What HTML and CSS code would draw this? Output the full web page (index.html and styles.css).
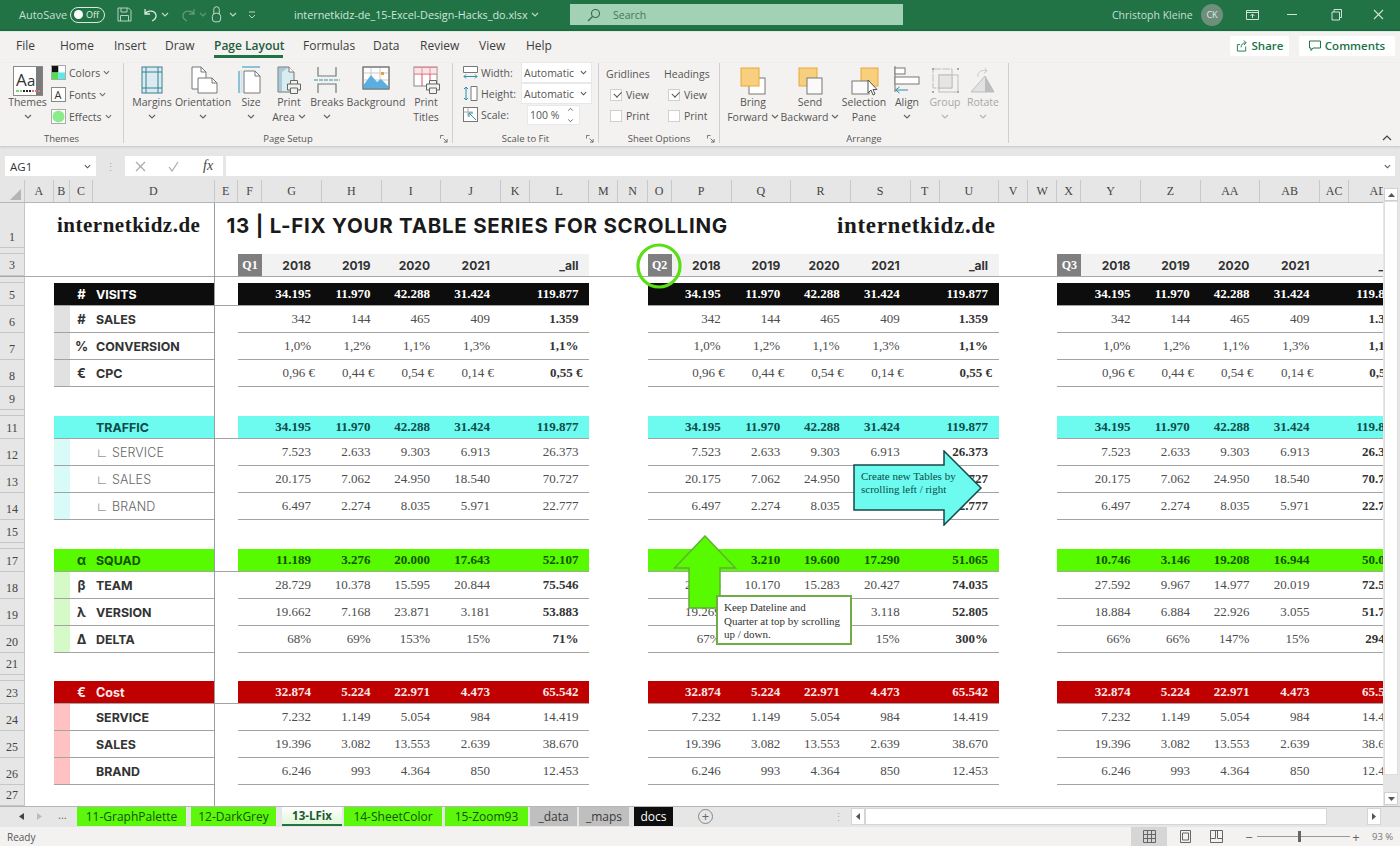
FILE: index.html
```html
<!DOCTYPE html>
<html lang="en">
<head>
<meta charset="utf-8">
<title>internetkidz-de_15-Excel-Design-Hacks_do.xlsx</title>
<link rel="stylesheet" href="styles.css">
</head>
<body>
<svg class="sprite" aria-hidden="true"><symbol id="chev" viewBox="0 0 8 5"><path d="M1 1l3 3 3-3" fill="none" stroke="currentColor" stroke-width="1.2"/></symbol>
<symbol id="launch" viewBox="0 0 9 9"><path d="M.5 4V.5H4M4 4l4 4M8 4.500V8H4.500" fill="none" stroke="#666" stroke-width="1"/></symbol>
<symbol id="printer" viewBox="0 0 14 14"><path d="M3.500 4V.5h7V4M3.500 10H.5V4h13v6h-3M3.500 8h7v5.500h-7z" fill="#f3f2f1" stroke="#666"/></symbol></svg>
<div class="app">

<header class="titlebar">
  <span class="autosave">AutoSave</span>
  <span class="toggle"><i class="knob"></i>Off</span>
  <svg class="ti ti-save" viewBox="0 0 15 15"><path d="M1 1h10.500L14 3.500V14H1zM4 1v4h6V1M3.500 14V8.500h8V14" fill="none" stroke="#b5d3c1"/></svg>
  <svg class="ti ti-undo" viewBox="0 0 15 15"><path d="M2 2v5h5M2 7c2-4 10-4 11 1 .5 3-2 5-4 6" fill="none" stroke="#d8e8de" stroke-width="1.300"/></svg>
  <svg class="tchev"><use href="#chev"/></svg>
  <svg class="ti ti-redo" viewBox="0 0 15 15"><path d="M13 2v5H8M13 7C11 3 3 3 2 8c-.5 3 2 5 4 6" fill="none" stroke="#5f9a7a" stroke-width="1.300"/></svg>
  <svg class="tchev dim"><use href="#chev"/></svg>
  <svg class="ti ti-touch" viewBox="0 0 12 18"><path d="M3 9V3.500a3 3 0 0 1 6 0V9M1.500 11c0-2 2-3.500 4.500-3.500s4.500 1.500 4.500 3.500v3a3 3 0 0 1-3 3h-3a3 3 0 0 1-3-3z" fill="none" stroke="#cfe2d6"/></svg>
  <svg class="tchev tchev-t"><use href="#chev"/></svg>
  <svg class="qat" viewBox="0 0 8 8"><path d="M1 1h6M1 4l3 3 3-3" fill="none" stroke="#bcd6c6"/></svg>
  <span class="filename">internetkidz-de_15-Excel-Design-Hacks_do.xlsx</span>
  <svg class="tchev fchev"><use href="#chev"/></svg>
  <div class="search">
    <svg class="search-ico" viewBox="0 0 14 14"><circle cx="8.500" cy="5.500" r="4" fill="none" stroke="#2f6b4a" stroke-width="1.100"/><path d="M5.500 8.500L1 13" stroke="#2f6b4a" stroke-width="1.100"/></svg>
    <span>Search</span>
  </div>
  <span class="user">Christoph Kleine</span>
  <span class="avatar">CK</span>
  <svg class="wi wi-ribbon" viewBox="0 0 13 13"><path d="M.5 2.500h12v9H.5zM.5 4.500h12M6.500 10V6M4.500 8l2-2 2 2" fill="none" stroke="#cfe2d6"/></svg>
  <svg class="wi wi-min" viewBox="0 0 13 13"><path d="M1 6.500h10" stroke="#cfe2d6"/></svg>
  <svg class="wi wi-max" viewBox="0 0 13 13"><path d="M2 4h7.500v8H2zM4 4V1.500h7.500V9.500H9.500" fill="none" stroke="#cfe2d6"/></svg>
  <svg class="wi wi-close" viewBox="0 0 13 13"><path d="M2 2l9 9M11 2l-9 9" stroke="#cfe2d6" stroke-width="1.100"/></svg>
</header>

<nav class="menutabs">
  <span>File</span><span>Home</span><span>Insert</span><span>Draw</span><span class="on">Page Layout</span><span>Formulas</span><span>Data</span><span>Review</span><span>View</span><span>Help</span>
  <div class="menu-actions">
    <span class="action act-share"><svg viewBox="0 0 12 13"><path d="M1 5h3M1 5v7h9V7M5 8c0-3 2-5 5-5M8 .5l2.500 2.500L8 5.500" fill="none" stroke="#217346"/></svg>Share</span>
    <span class="action act-comm"><svg viewBox="0 0 12 12"><path d="M.5 1h11v7H4L2 10.500V8H.5z" fill="none" stroke="#217346"/></svg>Comments</span>
  </div>
</nav>

<section class="ribbon">
  <div class="group g-themes">
    <div class="gbody">
      <div class="big b-themes">
        <svg class="ic" viewBox="0 0 30 30"><rect x=".5" y=".5" width="29" height="29" fill="#fff" stroke="#8a8a8a"/><path d="M23 1h6.500v28H23z" fill="#7b7b7b"/><text x="3" y="20" font-family="Open Sans, sans-serif" font-size="17" fill="#333">A</text><text x="14" y="20" font-family="Open Sans, sans-serif" font-size="15" fill="#333">a</text><path d="M3 25h3M7 25h2" stroke="#7fd27f" stroke-width="2"/><path d="M10 25h8" stroke="#222" stroke-width="2" stroke-dasharray="2 1"/><path d="M19 25h8" stroke="#d97a7a" stroke-width="2" stroke-dasharray="2 1"/></svg>
        <span>Themes</span><svg class="chev"><use href="#chev"/></svg>
      </div>
      <div class="smallstack">
        <span><svg class="sq" viewBox="0 0 15 15"><path d="M0 0h7.500v7.500H0z" fill="#111"/><path d="M7.500 0H15v7.500H7.500z" fill="#fff"/><path d="M0 7.500h7.500V15H0z" fill="#4fe04f"/><path d="M7.500 7.500H15V15H7.500z" fill="#5fe8e8"/><rect x=".5" y=".5" width="14" height="14" fill="none" stroke="#aaa"/></svg>Colors<svg class="chev"><use href="#chev"/></svg></span>
        <span><svg class="sq" viewBox="0 0 15 15"><rect x=".5" y=".5" width="14" height="14" fill="#fff" stroke="#888"/><text x="3.500" y="11.500" font-family="Open Sans, sans-serif" font-size="11" fill="#333">A</text></svg>Fonts<svg class="chev"><use href="#chev"/></svg></span>
        <span><svg class="sq" viewBox="0 0 15 15"><rect x=".5" y=".5" width="14" height="14" fill="#fff" stroke="#aaa"/><circle cx="7.500" cy="7.500" r="6" fill="#8cec8c"/></svg>Effects<svg class="chev"><use href="#chev"/></svg></span>
      </div>
    </div>
    <div class="glabel">Themes</div>
  </div>

  <div class="group g-page">
    <div class="gbody">
      <div class="big w48"><svg class="ic" viewBox="0 0 32 30"><rect x="6" y="1" width="20" height="26" fill="#d9ecf2" stroke="#3c7f8e"/><path d="M6 6h20M6 22h20M10 1v26M22 1v26" stroke="#3c7f8e"/></svg><span>Margins</span><svg class="chev"><use href="#chev"/></svg></div>
      <div class="big w54"><svg class="ic" viewBox="0 0 32 30"><path d="M5 1h9l5 5v17H5z" fill="#fff" stroke="#777"/><path d="M14 1v5h5" fill="none" stroke="#777"/><path d="M11 12h14l5 5v10H11z" fill="#fff" stroke="#777"/><path d="M25 12v5h5" fill="none" stroke="#777"/></svg><span>Orientation</span><svg class="chev"><use href="#chev"/></svg></div>
      <div class="big w42"><svg class="ic" viewBox="0 0 32 30"><path d="M9 5h11l5 5v17H9z" fill="#fff" stroke="#777"/><path d="M20 5v5h5" fill="none" stroke="#777"/><path d="M7 1h18M4 5v22" stroke="#6db3c9" stroke-width="1.500"/><path d="M5.500 4h2v23h-2z" fill="#cfe6ee"/></svg><span>Size</span><svg class="chev"><use href="#chev"/></svg></div>
      <div class="big w34"><svg class="ic" viewBox="0 0 32 30"><path d="M5 1h11l5 5v20H5z" fill="#d9ecf2" stroke="#777"/><path d="M16 1v5h5" fill="#fff" stroke="#777"/><path d="M9 6v20H5V1h11" fill="#7fa8b8" fill-opacity=".5"/><use href="#printer" x="14" y="14" width="14" height="14"/></svg><span>Print</span><span class="ln2">Area<svg class="chev"><use href="#chev"/></svg></span></div>
      <div class="big w42"><svg class="ic" viewBox="0 0 32 30"><path d="M7 1v9h18V1M7 27V18h18v9" fill="none" stroke="#777" stroke-width="1.200"/><path d="M3 14h26" stroke="#6db3c9" stroke-width="1.500" stroke-dasharray="4 1"/></svg><span>Breaks</span><svg class="chev"><use href="#chev"/></svg></div>
      <div class="big w56"><svg class="ic" viewBox="0 0 32 30"><rect x="3" y="1" width="26" height="22" fill="#fff" stroke="#777"/><path d="M3 7h26M3 14h26M11 1v22M20 1v22" stroke="#c9c9c9"/><path d="M3.500 19L11 9l6 7 4-3 8 8v2H3.500z" fill="#5aaee0"/><rect x="21" y="6" width="3" height="3" fill="#e8a13a"/><rect x="3" y="1" width="26" height="22" fill="none" stroke="#777"/></svg><span>Background</span></div>
      <div class="big w44"><svg class="ic" viewBox="0 0 32 30"><rect x="4" y="1" width="23" height="19" fill="#fff" stroke="#888"/><path d="M4 1.500h23M4 8h23M12 1v19M20 1v19" stroke="#d9505f"/><path d="M4 1h23v7H4z" fill="#f7c9cc" fill-opacity=".5"/><use href="#printer" x="16" y="14" width="14" height="14"/></svg><span>Print</span><span class="ln2">Titles</span></div>
    </div>
    <div class="glabel">Page Setup<svg class="launch"><use href="#launch"/></svg></div>
  </div>

  <div class="group g-scale">
    <div class="gbody scalebody">
      <div class="srow"><svg class="si" viewBox="0 0 15 14"><path d="M.5 1h14v6H.5z" fill="#fff" stroke="#777"/><path d="M1 11h13M1 11l2-2M1 11l2 2M14 11l-2-2M14 11l-2 2" fill="none" stroke="#2f8fa6"/></svg><span class="slab">Width:</span><span class="combo">Automatic<svg class="chev"><use href="#chev"/></svg></span></div>
      <div class="srow"><svg class="si" viewBox="0 0 15 15"><path d="M8 .5h6v14H8z" fill="#fff" stroke="#777"/><path d="M3 1v13M3 1L1 3M3 1l2 2M3 14l-2-2M3 14l2-2" fill="none" stroke="#2f8fa6"/></svg><span class="slab">Height:</span><span class="combo">Automatic<svg class="chev"><use href="#chev"/></svg></span></div>
      <div class="srow"><svg class="si" viewBox="0 0 15 15"><rect x=".5" y=".5" width="14" height="14" fill="#fff" stroke="#777"/><path d="M.5 5h9M5 .5v9" stroke="#aaa"/><path d="M6 6l7 7M6 6h4M6 6v4" fill="none" stroke="#2f8fa6"/></svg><span class="slab">Scale:</span><span class="spin">100 %<svg viewBox="0 0 7 18"><path d="M1 4l2.500-2.500L6 4M1 14l2.500 2.500L6 14" fill="none" stroke="#555"/></svg></span></div>
    </div>
    <div class="glabel">Scale to Fit<svg class="launch"><use href="#launch"/></svg></div>
  </div>

  <div class="group g-opts">
    <div class="gbody optsbody">
      <div class="ocol"><span class="ohead">Gridlines</span><span class="ochk"><i class="box checked"></i>View</span><span class="ochk"><i class="box"></i>Print</span></div>
      <div class="ocol"><span class="ohead">Headings</span><span class="ochk"><i class="box checked"></i>View</span><span class="ochk"><i class="box"></i>Print</span></div>
    </div>
    <div class="glabel">Sheet Options<svg class="launch"><use href="#launch"/></svg></div>
  </div>

  <div class="group g-arr">
    <div class="gbody">
      <div class="big w56"><svg class="ic" viewBox="0 0 32 30"><rect x="12" y="12" width="16" height="16" fill="#fff" stroke="#777"/><rect x="4" y="2" width="18" height="18" fill="#f8cf7c" stroke="#e6a93c"/></svg><span>Bring</span><span class="ln2">Forward<svg class="chev"><use href="#chev"/></svg></span></div>
      <div class="big w58"><svg class="ic" viewBox="0 0 32 30"><rect x="5" y="2" width="18" height="18" fill="#f8cf7c" stroke="#e6a93c"/><rect x="13" y="12" width="15" height="16" fill="#fafafa" stroke="#777"/></svg><span>Send</span><span class="ln2">Backward<svg class="chev"><use href="#chev"/></svg></span></div>
      <div class="big w50"><svg class="ic" viewBox="0 0 32 30"><rect x="13" y="2" width="17" height="18" fill="#f8cf7c" stroke="#e6a93c"/><rect x="4" y="15" width="17" height="13" fill="#fafafa" stroke="#777"/><path d="M20 14v13l3-3 2 5 2-1-2-4.500h4z" fill="#fff" stroke="#555"/></svg><span>Selection</span><span class="ln2">Pane</span></div>
      <div class="big w36"><svg class="ic" viewBox="0 0 32 30"><path d="M4 0v26" stroke="#777"/><rect x="4" y="2" width="10" height="6" fill="#fff" stroke="#777"/><rect x="4" y="11" width="24" height="7" fill="#fff" stroke="#777"/><path d="M4.500 24H17M4.500 24l4-3M4.500 24l4 3" fill="none" stroke="#2f8fa6"/></svg><span>Align</span><svg class="chev"><use href="#chev"/></svg></div>
      <div class="big w40 off"><svg class="ic" viewBox="0 0 32 30"><path d="M4 3h19v19H4z" fill="none" stroke="#bdbdbd" stroke-dasharray="8 1"/><rect x="10" y="9" width="19" height="17" fill="none" stroke="#bdbdbd"/><rect x="10" y="9" width="13" height="13" fill="#e5e5e5" stroke="#bdbdbd"/><path d="M3 2h2v2H3zM28 2h2v2h-2zM3 25h2v2H3zM28 25h2v2h-2z" fill="#aaa"/></svg><span>Group</span><svg class="chev"><use href="#chev"/></svg></div>
      <div class="big w36 off"><svg class="ic" viewBox="0 0 32 30"><path d="M4 26L18 10l9 16z" fill="#e2e2e2" stroke="#bdbdbd"/><path d="M18 10v16h9z" fill="#bdbdbd"/><path d="M11 11c-1-5 4-8 9-6M18 2l2 3-3 2" fill="none" stroke="#c9c9c9"/></svg><span>Rotate</span><svg class="chev"><use href="#chev"/></svg></div>
    </div>
    <div class="glabel">Arrange</div>
  </div>
  <svg class="collapse" viewBox="0 0 10 6"><path d="M1 5l4-4 4 4" fill="none" stroke="#444" stroke-width="1.200"/></svg>
</section>

<div class="fbar">
  <div class="namebox">AG1<svg class="caret"><use href="#chev"/></svg></div>
  <span class="fdots">⋮</span>
  <div class="fbtns">
    <svg viewBox="0 0 11 11"><path d="M1 1l9 9M10 1l-9 9" stroke="#a9a9a9" stroke-width="1.200"/></svg>
    <svg viewBox="0 0 11 11"><path d="M1 6l3 4 6-9" fill="none" stroke="#a9a9a9" stroke-width="1.200"/></svg>
    <span class="fx">fx</span>
  </div>
  <div class="finput"><svg class="caret"><use href="#chev"/></svg></div>
</div>

<main class="grid-area">
 <div class="sheet">
  <div class="colhead">
    <div class="corner"></div><div>A</div><div>B</div><div>C</div><div>D</div><div>E</div><div>F</div><div>G</div><div>H</div><div>I</div><div>J</div><div>K</div><div>L</div><div>M</div><div>N</div><div>O</div><div>P</div><div>Q</div><div>R</div><div>S</div><div>T</div><div>U</div><div>V</div><div>W</div><div>X</div><div>Y</div><div>Z</div><div>AA</div><div>AB</div><div>AC</div><div>AD</div>
  </div>

  <div class="row-title">
    <div class="rn">1</div>
    <div class="brand brand-a">internetkidz.de</div>
    <div class="headline">13 | L-FIX YOUR TABLE SERIES FOR SCROLLING</div>
    <div class="brand brand-b">internetkidz.de</div>
  </div>
  <div class="row h6"><div class="rn"></div></div>
  <div class="row h23 frozen"><div class="rn">3</div>
    <div class="tb t1 yr"><b class="q">Q1</b><b class="v">2018</b><b class="v">2019</b><b class="v">2020</b><b class="v">2021</b><b class="v">_all</b></div>
    <div class="tb t2 yr"><b class="q">Q2</b><b class="v">2018</b><b class="v">2019</b><b class="v">2020</b><b class="v">2021</b><b class="v">_all</b></div>
    <div class="tb t3 yr"><b class="q">Q3</b><b class="v">2018</b><b class="v">2019</b><b class="v">2020</b><b class="v">2021</b><b class="v">_all</b></div>
  </div>
  <div class="row h6"><div class="rn"></div></div>

  <div class="row h23 band black"><div class="rn">5</div><div class="sw"></div><div class="sy">#</div><div class="tx">VISITS</div><div class="e"></div>
    <div class="tb t1"><span class="v">34.195</span><span class="v">11.970</span><span class="v">42.288</span><span class="v">31.424</span><span class="v">119.877</span></div>
    <div class="tb t2"><span class="v">34.195</span><span class="v">11.970</span><span class="v">42.288</span><span class="v">31.424</span><span class="v">119.877</span></div>
    <div class="tb t3"><span class="v">34.195</span><span class="v">11.970</span><span class="v">42.288</span><span class="v">31.424</span><span class="v">119.877</span></div>
  </div>
  <div class="row h27 grey"><div class="rn">6</div><div class="sw"></div><div class="sy">#</div><div class="tx">SALES</div>
    <div class="tb t1"><span class="v">342</span><span class="v">144</span><span class="v">465</span><span class="v">409</span><span class="v sum">1.359</span></div>
    <div class="tb t2"><span class="v">342</span><span class="v">144</span><span class="v">465</span><span class="v">409</span><span class="v sum">1.359</span></div>
    <div class="tb t3"><span class="v">342</span><span class="v">144</span><span class="v">465</span><span class="v">409</span><span class="v sum">1.359</span></div>
  </div>
  <div class="row h27 grey"><div class="rn">7</div><div class="sw"></div><div class="sy">%</div><div class="tx">CONVERSION</div>
    <div class="tb t1"><span class="v">1,0%</span><span class="v">1,2%</span><span class="v">1,1%</span><span class="v">1,3%</span><span class="v sum">1,1%</span></div>
    <div class="tb t2"><span class="v">1,0%</span><span class="v">1,2%</span><span class="v">1,1%</span><span class="v">1,3%</span><span class="v sum">1,1%</span></div>
    <div class="tb t3"><span class="v">1,0%</span><span class="v">1,2%</span><span class="v">1,1%</span><span class="v">1,3%</span><span class="v sum">1,1%</span></div>
  </div>
  <div class="row h27 grey cur"><div class="rn">8</div><div class="sw"></div><div class="sy">€</div><div class="tx">CPC</div>
    <div class="tb t1"><span class="v">0,96 €</span><span class="v">0,44 €</span><span class="v">0,54 €</span><span class="v">0,14 €</span><span class="v sum">0,55 €</span></div>
    <div class="tb t2"><span class="v">0,96 €</span><span class="v">0,44 €</span><span class="v">0,54 €</span><span class="v">0,14 €</span><span class="v sum">0,55 €</span></div>
    <div class="tb t3"><span class="v">0,96 €</span><span class="v">0,44 €</span><span class="v">0,54 €</span><span class="v">0,14 €</span><span class="v sum">0,55 €</span></div>
  </div>
  <div class="row h23"><div class="rn">9</div></div>
  <div class="row h6"><div class="rn"></div></div>

  <div class="row h23 band cyan"><div class="rn">11</div><div class="sw"></div><div class="sy"></div><div class="tx">TRAFFIC</div><div class="e"></div>
    <div class="tb t1"><span class="v">34.195</span><span class="v">11.970</span><span class="v">42.288</span><span class="v">31.424</span><span class="v">119.877</span></div>
    <div class="tb t2"><span class="v">34.195</span><span class="v">11.970</span><span class="v">42.288</span><span class="v">31.424</span><span class="v">119.877</span></div>
    <div class="tb t3"><span class="v">34.195</span><span class="v">11.970</span><span class="v">42.288</span><span class="v">31.424</span><span class="v">119.877</span></div>
  </div>
  <div class="row h27 lcyan sub"><div class="rn">12</div><div class="sw"></div><div class="sy"></div><div class="tx">∟ SERVICE</div>
    <div class="tb t1"><span class="v">7.523</span><span class="v">2.633</span><span class="v">9.303</span><span class="v">6.913</span><span class="v">26.373</span></div>
    <div class="tb t2"><span class="v">7.523</span><span class="v">2.633</span><span class="v">9.303</span><span class="v">6.913</span><span class="v sum">26.373</span></div>
    <div class="tb t3"><span class="v">7.523</span><span class="v">2.633</span><span class="v">9.303</span><span class="v">6.913</span><span class="v sum">26.373</span></div>
  </div>
  <div class="row h27 lcyan sub"><div class="rn">13</div><div class="sw"></div><div class="sy"></div><div class="tx">∟ SALES</div>
    <div class="tb t1"><span class="v">20.175</span><span class="v">7.062</span><span class="v">24.950</span><span class="v">18.540</span><span class="v">70.727</span></div>
    <div class="tb t2"><span class="v">20.175</span><span class="v">7.062</span><span class="v">24.950</span><span class="v"></span><span class="v sum">70.727</span></div>
    <div class="tb t3"><span class="v">20.175</span><span class="v">7.062</span><span class="v">24.950</span><span class="v">18.540</span><span class="v sum">70.727</span></div>
  </div>
  <div class="row h27 lcyan sub"><div class="rn">14</div><div class="sw"></div><div class="sy"></div><div class="tx">∟ BRAND</div>
    <div class="tb t1"><span class="v">6.497</span><span class="v">2.274</span><span class="v">8.035</span><span class="v">5.971</span><span class="v">22.777</span></div>
    <div class="tb t2"><span class="v">6.497</span><span class="v">2.274</span><span class="v">8.035</span><span class="v"></span><span class="v sum">22.777</span></div>
    <div class="tb t3"><span class="v">6.497</span><span class="v">2.274</span><span class="v">8.035</span><span class="v">5.971</span><span class="v sum">22.777</span></div>
  </div>
  <div class="row h23"><div class="rn">15</div></div>
  <div class="row h6"><div class="rn"></div></div>

  <div class="row h23 band green"><div class="rn">17</div><div class="sw"></div><div class="sy">α</div><div class="tx">SQUAD</div><div class="e"></div>
    <div class="tb t1"><span class="v">11.189</span><span class="v">3.276</span><span class="v">20.000</span><span class="v">17.643</span><span class="v">52.107</span></div>
    <div class="tb t2"><span class="v"></span><span class="v">3.210</span><span class="v">19.600</span><span class="v">17.290</span><span class="v">51.065</span></div>
    <div class="tb t3"><span class="v">10.746</span><span class="v">3.146</span><span class="v">19.208</span><span class="v">16.944</span><span class="v">50.044</span></div>
  </div>
  <div class="row h27 lgreen"><div class="rn">18</div><div class="sw"></div><div class="sy">β</div><div class="tx">TEAM</div>
    <div class="tb t1"><span class="v">28.729</span><span class="v">10.378</span><span class="v">15.595</span><span class="v">20.844</span><span class="v sum">75.546</span></div>
    <div class="tb t2"><span class="v">28.155</span><span class="v">10.170</span><span class="v">15.283</span><span class="v">20.427</span><span class="v sum">74.035</span></div>
    <div class="tb t3"><span class="v">27.592</span><span class="v">9.967</span><span class="v">14.977</span><span class="v">20.019</span><span class="v sum">72.555</span></div>
  </div>
  <div class="row h27 lgreen"><div class="rn">19</div><div class="sw"></div><div class="sy">λ</div><div class="tx">VERSION</div>
    <div class="tb t1"><span class="v">19.662</span><span class="v">7.168</span><span class="v">23.871</span><span class="v">3.181</span><span class="v sum">53.883</span></div>
    <div class="tb t2"><span class="v">19.269</span><span class="v"></span><span class="v"></span><span class="v">3.118</span><span class="v sum">52.805</span></div>
    <div class="tb t3"><span class="v">18.884</span><span class="v">6.884</span><span class="v">22.926</span><span class="v">3.055</span><span class="v sum">51.749</span></div>
  </div>
  <div class="row h27 lgreen"><div class="rn">20</div><div class="sw"></div><div class="sy">Δ</div><div class="tx">DELTA</div>
    <div class="tb t1"><span class="v">68%</span><span class="v">69%</span><span class="v">153%</span><span class="v">15%</span><span class="v sum">71%</span></div>
    <div class="tb t2"><span class="v">67%</span><span class="v"></span><span class="v"></span><span class="v">15%</span><span class="v sum">300%</span></div>
    <div class="tb t3"><span class="v">66%</span><span class="v">66%</span><span class="v">147%</span><span class="v">15%</span><span class="v sum">294%</span></div>
  </div>
  <div class="row h22"><div class="rn">21</div></div>
  <div class="row h6"><div class="rn"></div></div>

  <div class="row h23 band red"><div class="rn">23</div><div class="sw"></div><div class="sy">€</div><div class="tx cost">Cost</div><div class="e"></div>
    <div class="tb t1"><span class="v">32.874</span><span class="v">5.224</span><span class="v">22.971</span><span class="v">4.473</span><span class="v">65.542</span></div>
    <div class="tb t2"><span class="v">32.874</span><span class="v">5.224</span><span class="v">22.971</span><span class="v">4.473</span><span class="v">65.542</span></div>
    <div class="tb t3"><span class="v">32.874</span><span class="v">5.224</span><span class="v">22.971</span><span class="v">4.473</span><span class="v">65.542</span></div>
  </div>
  <div class="row h27 pink"><div class="rn">24</div><div class="sw"></div><div class="sy"></div><div class="tx">SERVICE</div>
    <div class="tb t1"><span class="v">7.232</span><span class="v">1.149</span><span class="v">5.054</span><span class="v">984</span><span class="v">14.419</span></div>
    <div class="tb t2"><span class="v">7.232</span><span class="v">1.149</span><span class="v">5.054</span><span class="v">984</span><span class="v">14.419</span></div>
    <div class="tb t3"><span class="v">7.232</span><span class="v">1.149</span><span class="v">5.054</span><span class="v">984</span><span class="v">14.419</span></div>
  </div>
  <div class="row h27 pink"><div class="rn">25</div><div class="sw"></div><div class="sy"></div><div class="tx">SALES</div>
    <div class="tb t1"><span class="v">19.396</span><span class="v">3.082</span><span class="v">13.553</span><span class="v">2.639</span><span class="v">38.670</span></div>
    <div class="tb t2"><span class="v">19.396</span><span class="v">3.082</span><span class="v">13.553</span><span class="v">2.639</span><span class="v">38.670</span></div>
    <div class="tb t3"><span class="v">19.396</span><span class="v">3.082</span><span class="v">13.553</span><span class="v">2.639</span><span class="v">38.670</span></div>
  </div>
  <div class="row h27 pink"><div class="rn">26</div><div class="sw"></div><div class="sy"></div><div class="tx">BRAND</div>
    <div class="tb t1"><span class="v">6.246</span><span class="v">993</span><span class="v">4.364</span><span class="v">850</span><span class="v">12.453</span></div>
    <div class="tb t2"><span class="v">6.246</span><span class="v">993</span><span class="v">4.364</span><span class="v">850</span><span class="v">12.453</span></div>
    <div class="tb t3"><span class="v">6.246</span><span class="v">993</span><span class="v">4.364</span><span class="v">850</span><span class="v">12.453</span></div>
  </div>
  <div class="row h21"><div class="rn">27</div></div>

  <div class="vline"></div>

  <svg class="ring" viewBox="0 0 46 46"><circle cx="23" cy="23" r="21" fill="none" stroke="#5ade14" stroke-width="3.200"/></svg>

  <div class="call-right">
    <svg viewBox="0 0 130 76"><path d="M1 15h90V1l37 37-37 37V60H1z" fill="#6cfbee" stroke="#17484a" stroke-width="1.500"/></svg>
    <p>Create new Tables by<br>scrolling left / right</p>
  </div>
  <svg class="call-up" viewBox="0 0 64 74"><path d="M32 1l30.500 32H47v40H16V33H1.500z" fill="#58fa00" stroke="#5fb034" stroke-width="1.500"/></svg>
  <div class="call-box">Keep Dateline and<br>Quarter at top by scrolling<br>up / down.</div>
 </div>

 <aside class="vscroll">
   <div class="vbtn"><svg viewBox="0 0 7 4"><path d="M0 4l3.500-4L7 4z" fill="#555"/></svg></div>
   <div class="vthumb"></div>
   <div class="vtrack"></div>
   <div class="vbtn"><svg viewBox="0 0 7 4"><path d="M0 0l3.500 4L7 0z" fill="#555"/></svg></div>
 </aside>
</main>

<div class="tabbar">
  <div class="navs"><svg viewBox="0 0 5 7"><path d="M5 0L0 3.500 5 7z" fill="#444"/></svg><svg viewBox="0 0 5 7"><path d="M0 0l5 3.500L0 7z" fill="#bbb"/></svg><span>...</span></div>
  <span class="stab g s11">11-GraphPalette</span>
  <span class="stab g s12">12-DarkGrey</span>
  <span class="stab act s13">13-LFix</span>
  <span class="stab g s14">14-SheetColor</span>
  <span class="stab g s15">15-Zoom93</span>
  <span class="stab gr s16">_data</span>
  <span class="stab gr s17">_maps</span>
  <span class="stab blk s18">docs</span>
  <span class="addsheet">+</span>
  <span class="hdots">⋮</span>
  <div class="hscroll">
    <span class="hbtn"><svg viewBox="0 0 4 7"><path d="M4 0L0 3.500 4 7z" fill="#555"/></svg></span>
    <span class="hthumb"></span>
    <span class="hrest"></span>
    <span class="hbtn"><svg viewBox="0 0 4 7"><path d="M0 0l4 3.500L0 7z" fill="#555"/></svg></span>
  </div>
</div>

<footer class="status">
  <span class="ready">Ready</span>
  <span class="view sel"><svg viewBox="0 0 13 13"><path d="M.5.5h12v12H.5zM.5 4.500h12M.5 8.500h12M4.500.5v12M8.500.5v12" fill="none" stroke="#666"/></svg></span>
  <span class="view"><svg viewBox="0 0 13 13"><path d="M1.500.5h10v12h-10zM3.500 3h6v7h-6z" fill="none" stroke="#666"/></svg></span>
  <span class="view v3"><svg viewBox="0 0 13 13"><path d="M.5.5h12v12H.5zM.5 8.500h5V.5M7.500.5v8h5" fill="none" stroke="#666"/></svg></span>
  <span class="zm zm-minus">−</span>
  <div class="slider"><i></i></div>
  <span class="zm">+</span>
  <span class="pct">93 %</span>
</footer>

</div>
</body>
</html>
```
FILE: styles.css
```css
*{box-sizing:border-box}
html,body{margin:0;padding:0;width:1400px;height:846px;overflow:hidden;background:#fff}
body{font-family:"Open Sans","Noto Sans",sans-serif;color:#444}
.sprite{display:none}
.app{display:flex;flex-direction:column;width:1400px;height:846px}

/* title bar */
.titlebar{height:31px;background:#217346;border-bottom:2px solid #1c6a40;display:flex;align-items:center;color:#c9dfd1;font-size:11px;flex:none}
.autosave{margin-left:19px;width:51px}
.toggle{width:35px;height:16px;border:1px solid #dbe9e0;border-radius:8px;display:flex;align-items:center;font-size:9px;color:#e3efe8;padding-left:3px;gap:3px}
.knob{width:9px;height:9px;border-radius:50%;background:#fff;flex:none}
.ti{flex:none;width:15px;height:15px}
.ti-save{margin-left:12px}
.ti-undo{margin-left:11px}
.tchev{width:8px;height:5px;color:#bcd6c6;margin-left:3px;flex:none}
.tchev.dim{color:#5f9a7a}
.ti-redo{margin-left:12px}
.ti-touch{margin-left:4px;width:11px;height:17px}
.tchev-t{margin-left:7px}
.qat{width:8px;height:8px;margin-left:11px;flex:none}
.filename{margin-left:38px;width:237px;white-space:nowrap;font-size:10.800px;color:#d3e5da}
.tchev.fchev{margin-left:0}
.search{margin-left:31px;width:333px;height:21px;background:#a3d1b5;display:flex;align-items:center;color:#3f7a59;font-size:10.500px}
.search-ico{width:14px;height:14px;margin-left:17px}
.search span{margin-left:12px}
.user{margin-left:209px;width:88px;font-size:10.5px;white-space:nowrap}
.avatar{width:22px;height:22px;border-radius:50%;background:#6f8f7d;color:#dfe9e3;font-size:9px;display:flex;align-items:center;justify-content:center;margin-left:1px}
.wi{width:13px;height:13px;flex:none}
.wi-ribbon{margin-left:23px}
.wi-min{margin-left:27px}
.wi-max{margin-left:31px}
.wi-close{margin-left:29px}

/* menu tabs */
.menutabs{height:32px;flex:none;background:#f3f2f1;border-top:1px solid #dcebe2;padding:0 0 4px 16px;display:grid;grid-template-columns:44px 54px 51px 49px 89px 70px 47px 59px 47px 50px 1fr;align-items:center;font-size:12px;color:#3d3d3d}
.menutabs>span{white-space:nowrap}
.menutabs .on{font-weight:600;color:#1f5c3a;position:relative;width:69px}
.menutabs .on::after{content:"";position:absolute;left:0;right:0;top:18px;height:3px;background:#217346}
.menu-actions{display:flex;justify-content:flex-end;padding-right:5px;gap:10px}
.action{background:#fff;border-radius:2px;height:20px;display:flex;align-items:center;justify-content:center;color:#217346;font-weight:600;font-size:11.500px;gap:4px}
.action svg{width:12px;height:12px}
.act-share{width:59px}
.act-comm{width:96px}

/* ribbon */
.ribbon{height:83px;flex:none;background:#f3f2f1;display:flex;box-shadow:0 1px 2px #c4c4c4;position:relative;font-size:11px;color:#555;z-index:1}
.group{display:flex;flex-direction:column;border-right:1px solid #cfcfcf;height:80px;position:relative}
.gbody{flex:1;display:flex;min-height:0;padding-top:3px}
.glabel{height:14px;line-height:14px;font-size:9.500px;text-align:center;color:#555;margin-bottom:-3px;white-space:nowrap;position:relative}
.launch{position:absolute;right:4px;top:3px;width:8px;height:8px}
.g-themes{width:124px}
.g-page{width:329px;}
.g-page .gbody{padding-left:4px}
.g-scale{width:146px}
.g-opts{width:121px}
.g-arr{width:289px}
.g-arr .gbody{padding-left:5px}
.big{display:flex;flex-direction:column;align-items:center;line-height:15px;white-space:nowrap;flex:none;font-size:10.500px}
.big .ic{width:32px;height:30px;margin-bottom:-1px;flex:none}
.big .chev{width:8px;height:5px;color:#666;margin-top:4px;flex:none}
.big .ln2 .chev{margin:0 0 2px 3px}
.big.off{color:#a8a8a8}
.big.off .chev{color:#b5b5b5}
.b-themes{width:51px;margin-left:2px}
.w34{width:34px}.w36{width:36px}.w40{width:40px}.w42{width:42px}.w44{width:44px}.w48{width:48px}.w50{width:50px}.w54{width:54px}.w56{width:56px}.w58{width:58px}
.smallstack{display:flex;flex-direction:column;gap:5px;margin:-2px 0 0 -2px;font-size:10.500px}
.smallstack span{display:flex;align-items:center;height:17px;white-space:nowrap}
.smallstack .sq{width:15px;height:15px;margin-right:3px}
.smallstack .chev{width:7px;height:5px;color:#666;margin-left:3px}
.gbody.scalebody{flex-direction:column;padding:0 0 0 10px;margin-top:-1px}
.srow{display:flex;align-items:center;height:21px;white-space:nowrap;font-size:10.500px}
.si{width:15px;height:15px;margin-right:3px;flex:none}
.slab{width:40px}
.combo{width:71px;height:21px;background:#fff;border:1px solid #e8e8e8;display:flex;align-items:center;justify-content:space-between;padding:0 4px 0 2px}
.combo .chev{width:7px;height:5px;color:#555}
.spin{width:53px;height:20px;background:#fff;border:1px solid #e8e8e8;margin-left:6px;display:flex;align-items:center;justify-content:space-between;padding:0 5px 0 2px}
.spin svg{width:7px;height:16px}
.gbody.optsbody{padding:0 0 0 7px;gap:15px}
.ocol{display:flex;flex-direction:column;width:43px}
.ohead{height:21px;line-height:22px;font-size:10.500px;white-space:nowrap}
.ochk{height:21px;display:flex;align-items:center;padding-left:4px;gap:4px;font-size:10.500px}
.box{width:12px;height:12px;background:#fff;border:1px solid #d0d0d0;flex:none;position:relative}
.box.checked::after{content:"";position:absolute;left:2.500px;top:1.500px;width:6px;height:3.500px;border-left:1px solid #555;border-bottom:1px solid #555;transform:rotate(-45deg)}
.collapse{position:absolute;right:8px;bottom:5px;width:10px;height:6px}

/* formula bar */
.fbar{height:34px;flex:none;background:#e6e6e6;display:flex;align-items:center;padding:6px 5px 0}
.namebox{width:91px;height:20px;background:#fff;font-size:11.500px;color:#333;display:flex;align-items:center;justify-content:space-between;padding:0 5px}
.caret{width:7px;height:5px;color:#555}
.fdots{width:29px;text-align:center;font-size:11px;color:#aaa}
.fbtns{width:98px;height:20px;background:#fff;display:flex;align-items:center;padding-left:10px;gap:22px}
.fbtns svg{width:11px;height:11px}
.fx{font-family:"Liberation Serif",serif;font-style:italic;font-size:14px;color:#444;margin-left:2px}
.finput{margin-left:3px;width:1169px;height:20px;background:#fff;display:flex;align-items:center;justify-content:flex-end;padding-right:4px}

/* sheet */
.grid-area{flex:none;height:626px;display:flex;background:#fff}
.sheet{width:1383px;height:626px;position:relative;overflow:hidden;flex:none}
.colhead{height:23px;display:grid;grid-template-columns:25px 28.500px 16.500px 23px 121.500px 23.500px 24px 60px 59.500px 59.500px 60px 29px 59.400px 29px 29.300px 24px 60px 59.500px 59.500px 60px 29px 59.400px 29px 29px 24px 60px 59.500px 59.500px 60px 29px 59.400px;background:#e6e6e6;border-bottom:1px solid #b5b5b5;font-family:"Liberation Serif",serif;font-size:12px;color:#444}
.colhead>div{display:flex;align-items:center;justify-content:center;border-right:1px solid #c9c9c9;overflow:hidden;white-space:nowrap}
.corner{background:linear-gradient(135deg,transparent 64%,#b4b4b4 65%) no-repeat 5px 5px/16px 15px}
.row-title{height:45px;display:grid;grid-template-columns:25px 189.500px 622.500px 1fr;align-items:center}
.row{display:grid;grid-template-columns:25px 28.500px 16.500px 23px 121.500px 23.500px 351.400px 58.300px 351.400px 58.300px 351.400px}
.h6{height:6px}.h21{height:21px}.h22{height:22px}.h23{height:23px}.h27{height:27px}
.rn{grid-column:1;background:#e6e6e6;border-bottom:1px solid #c6c6c6;border-right:1px solid #c6c6c6;font-family:"Liberation Serif",serif;font-size:12px;line-height:14px;color:#444;display:flex;align-items:flex-end;justify-content:center;padding-bottom:3px;height:100%;overflow:hidden}
.brand{font-family:"Liberation Serif",serif;font-weight:700;color:#1a1a1a;white-space:nowrap}
.brand-a{padding-left:32px;font-size:21px;letter-spacing:.5px}
.brand-b{font-size:23px;letter-spacing:.65px}
.headline{font-family:Inter,sans-serif;font-weight:700;font-size:20.500px;letter-spacing:.75px;color:#1a1a1a;padding-left:12px;white-space:nowrap}
.frozen{border-bottom:1px solid #a8a8a8}
.sw{grid-column:3;border-bottom:1px solid #a3a3a3}
.sy{grid-column:4;border-bottom:1px solid #a3a3a3;font-family:Inter,sans-serif;font-weight:700;font-size:13px;color:#333;display:flex;align-items:center;justify-content:center}
.tx{grid-column:5;border-bottom:1px solid #a3a3a3;font-family:Inter,sans-serif;font-weight:700;font-size:12.400px;color:#333;display:flex;align-items:center;padding-left:3px;white-space:nowrap}
.e{grid-column:6;border-bottom:1px solid #a3a3a3}
.tb{display:grid;grid-template-columns:24px 60px 59.500px 59.500px 60px 88.400px;align-items:center;border-bottom:1px solid #a3a3a3;font-family:"Liberation Serif",serif;font-size:13px;color:#4d4d4d;white-space:nowrap}
.t1{grid-column:7}.t2{grid-column:9}.t3{grid-column:11}
.v{text-align:right;padding-right:11px}
.tb>.v:first-child{grid-column:2}
.sum{font-weight:700;color:#333}
.cur .v{padding-right:7px}
.yr{background:#f2f2f2;border-bottom:0;font-family:Inter,sans-serif;font-size:12px;color:#333;height:22px}
.yr .v{font-weight:700}
.q{height:100%;background:#7f7f7f;color:#fff;font-family:"Liberation Serif",serif;font-size:12px;display:flex;align-items:center;justify-content:center}
.band .tb{font-weight:700}
.black .sw,.black .sy,.black .tx,.black .tb{background:#0d0d0d;color:#fff}
.cyan .sw,.cyan .sy,.cyan .tx,.cyan .tb{background:#6cfbee;color:#0f4a4a}
.green .sw,.green .sy,.green .tx,.green .tb{background:#58fa00;color:#145200}
.red .sw,.red .sy,.red .tx,.red .tb{background:#c00000;color:#fde8e8}
.grey .sw{background:#e1e1e1}
.lcyan .sw{background:#d8fbf8}
.lgreen .sw{background:#d6f9c8}
.pink .sw{background:#ffc1c1}
.sub .tx{font-weight:300;font-size:12.500px;color:#666;letter-spacing:.1px}
.tx.cost{font-size:12.500px}
.vline{position:absolute;left:214px;top:23px;bottom:0;width:1px;background:#9c9c9c}
.ring{position:absolute;left:636px;top:63px;width:46px;height:46px}
.call-right{position:absolute;left:853px;top:270px;width:130px;height:76px}
.call-right svg{width:130px;height:76px;display:block}
.call-right p{position:absolute;margin:0;left:8px;top:20px;font-family:"Liberation Serif",serif;font-size:11px;line-height:13px;color:#0f4a4a;white-space:nowrap}
.call-up{position:absolute;left:673px;top:355px;width:64px;height:74px}
.call-box{position:absolute;left:716px;top:415px;width:136px;height:50px;background:#fff;border:2px solid #70ad47;padding:4px 0 0 6px;font-family:"Liberation Serif",serif;font-size:11px;line-height:13.500px;color:#333;white-space:nowrap}

/* vertical scroll */
.vscroll{width:17px;background:#e6e6e6;display:flex;flex-direction:column;padding:8px 2px 1px 1px}
.vbtn{height:13px;background:#fff;border:1px solid #d0d0d0;display:flex;align-items:center;justify-content:center;flex:none}
.vbtn svg{width:7px;height:4px}
.vthumb{height:574px;background:#fff;border:1px solid #dedede;flex:none}
.vtrack{flex:1;background:#e6e6e6}

/* sheet tabs */
.tabbar{height:21px;flex:none;background:#e6e6e6;border-top:1px solid #b5b5b5;display:flex;align-items:stretch;font-size:12px;padding-bottom:1px}
.navs{width:77px;display:flex;align-items:center;padding-left:19px;gap:13px;color:#666;font-size:11px}
.navs svg{width:5px;height:7px}
.navs span{margin-left:3px;line-height:8px;padding-bottom:3px}
.stab{display:flex;align-items:center;justify-content:center;white-space:nowrap;flex:none}
.stab.g{background:#5cf70a;color:#14530a}
.stab.gr{background:#bfbfbf;color:#3a3a3a}
.stab.blk{background:#0d0d0d;color:#fff}
.stab.act{background:linear-gradient(#fff,#e2f6d9);color:#1d5a34;font-weight:700;border-bottom:2px solid #217346;font-size:11.500px}
.s11{width:109px;margin-right:5px}
.s12{width:85px;margin-right:6px}
.s13{width:60px;margin-right:2px}
.s14{width:98px;margin-right:3px}
.s15{width:83px;margin-right:2px}
.s16{width:47px;margin-right:2px}
.s17{width:50px;margin-right:5px}
.s18{width:39px}
.addsheet{width:15px;height:15px;border:1px solid #888;border-radius:50%;margin:2px 0 0 25px;display:flex;align-items:center;justify-content:center;font-size:13px;line-height:13px;color:#666;flex:none}
.hdots{margin-left:117px;width:16px;color:#aaa;text-align:center;align-self:center;font-size:11px}
.hscroll{flex:none;width:530px;display:flex;align-items:center;margin-left:5px}
.hbtn{width:14px;height:17px;background:#fff;display:flex;align-items:center;justify-content:center;border:1px solid #d5d5d5}
.hbtn svg{width:4px;height:7px}
.hthumb{width:462px;height:17px;background:#fff;border:1px solid #d5d5d5}
.hrest{width:40px}

/* status bar */
.status{height:19px;flex:none;background:#f3f2f1;display:flex;align-items:center;font-size:10px;color:#555}
.ready{margin-left:7px;width:1124px}
.view{width:36px;height:19px;display:flex;align-items:center;justify-content:center;flex:none}
.view svg{width:13px;height:13px}
.view.sel{background:#d6d6d6}
.view.v3{width:26px}
.zm{font-size:13px;color:#666;width:12px;text-align:center}
.zm-minus{margin-left:14px}
.slider{width:93px;height:1px;background:#999;position:relative;margin-left:2px}
.slider i{position:absolute;left:41px;top:-5px;width:3px;height:11px;background:#666}
.pct{margin-left:10px;font-size:9.500px;color:#777;white-space:nowrap}
```
